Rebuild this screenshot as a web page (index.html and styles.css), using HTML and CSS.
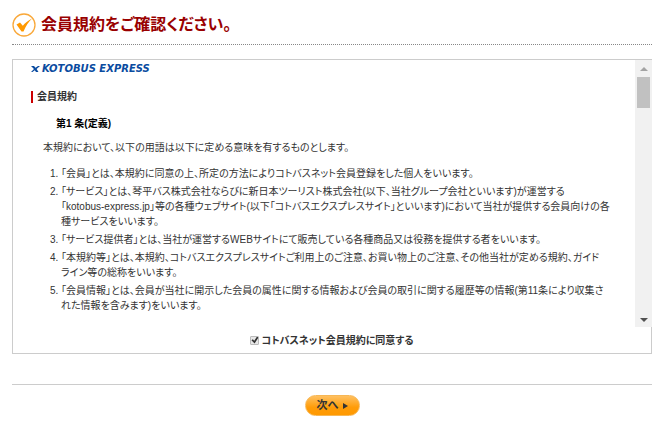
FILE: index.html
```html
<!DOCTYPE html>
<html lang="ja">
  <head>
    <meta charset="UTF-8" />
    <meta name="viewport" content="width=device-width, initial-scale=1.0" />
    <title>会員規約</title>
    <link rel="stylesheet" href="styles.css">
  </head>
  <body>
    <h1 class="page-title">
      <svg class="title-icon" width="24" height="24" viewBox="0 0 24 24" aria-hidden="true">
        <circle cx="12" cy="12" r="11" fill="#fff" stroke="#f9a83a" stroke-width="1.3" />
        <path d="M4.500 11.500 L8 9.500 L10.800 12.800 C13 10 15.800 7.800 20 5.500 C16.500 9 13.700 13 11.500 18.500 L9.500 18.500 Z" fill="#f90" />
      </svg>
      会員規約をご確認ください。
    </h1>
    <form class="agreement">
      <div class="terms-box">
        <div class="terms-scroll">
          <div class="terms">
            <div class="logo">
              <svg width="9" height="6" viewBox="0 0 9 6" aria-hidden="true">
                <path d="M0 0 H3 L4.500 1.700 L7 0 H9 L5.600 3 L7.500 6 H5 L3.800 4.300 L1.500 6 H0 L3 3 Z" fill="#0a4ba0" />
              </svg>
              <span>KOTOBUS EXPRESS</span>
            </div>
            <h2>会員規約</h2>
            <h3>第1 条(定義)</h3>
            <p>本規約において、以下の用語は以下に定める意味を有するものとします。</p>
            <ol>
              <li>「会員」とは、本規約に同意の上、所定の方法によりコトバスネット会員登録をした個人をいいます。</li>
              <li>「サービス」とは、琴平バス株式会社ならびに新日本ツーリスト株式会社(以下、当社グループ会社といいます)が運営する<br />「kotobus-express.jp」等の各種ウェブサイト(以下「コトバスエクスプレスサイト」といいます)において当社が提供する会員向けの各<br />種サービスをいいます。</li>
              <li>「サービス提供者」とは、当社が運営するWEBサイトにて販売している各種商品又は役務を提供する者をいいます。</li>
              <li>「本規約等」とは、本規約、コトバスエクスプレスサイトご利用上のご注意、お買い物上のご注意、その他当社が定める規約、ガイド<br />ライン等の総称をいいます。</li>
              <li>「会員情報」とは、会員が当社に開示した会員の属性に関する情報および会員の取引に関する履歴等の情報(第11条により収集さ<br />れた情報を含みます)をいいます。</li>
            </ol>
          </div>
          <div class="scrollbar" aria-hidden="true">
            <span class="arrow arrow-up"></span>
            <span class="thumb"></span>
            <span class="arrow arrow-down"></span>
          </div>
        </div>
        <div class="agree">
          <input type="checkbox" id="agree" checked />
          <label for="agree">コトバスネット会員規約に同意する</label>
        </div>
      </div>
      <div class="buttons">
        <button type="submit">次へ
          <svg width="5" height="6" viewBox="0 0 5 6" aria-hidden="true"><path d="M0 0 L5 3 L0 6 Z" fill="#333" /></svg>
        </button>
      </div>
    </form>
  </body>
</html>
```
FILE: styles.css
```css
body {
  margin: 0;
  padding: 13px 14px 16px 12px;
  background-color: #fff;
  color: #333;
  font-family: 'Liberation Sans', 'Noto Sans CJK JP', sans-serif;
  font-size: 10px;
  line-height: 15px;
  font-feature-settings: 'palt';
}

.page-title {
  display: flex;
  align-items: center;
  gap: 5px;
  margin: 0 0 14px;
  padding-bottom: 7px;
  border-bottom: 1px dotted #888;
  color: #900;
  font-size: 16px;
  line-height: 24px;
}

.title-icon {
  flex: none;
}

.terms-box {
  border: 1px solid #ccc;
}

.terms-scroll {
  display: flex;
  margin-right: -1px;
}

.terms {
  flex: 1;
  min-width: 0;
  padding: 4px 18px 11px;
}

.logo {
  display: flex;
  align-items: center;
  gap: 2px;
  height: 10px;
  color: #0a4ba0;
  font: italic bold 10px/10px 'DejaVu Sans', sans-serif;
}

.terms h2 {
  margin: 17px 0 0;
  padding-left: 4px;
  border-left: 2px solid #c00;
  font-size: 10px;
  line-height: 12px;
}

.terms h3 {
  margin: 13px 0 0 25px;
  color: #000;
  font-size: 10px;
  line-height: 15px;
}

.terms p {
  margin: 9px 0 0 12px;
}

.terms ol {
  margin: 11px 0 0;
  padding-left: 30px;
}

.terms li {
  margin-bottom: 3px;
  white-space: nowrap;
}

.scrollbar {
  display: flex;
  flex-direction: column;
  align-items: center;
  width: 17px;
  background-color: #f1f1f1;
}

.arrow {
  border: 4px solid transparent;
}

.arrow-up {
  margin-top: 3px;
  border-bottom-color: #a3a3a3;
}

.thumb {
  width: 13px;
  height: 31px;
  margin-top: 6px;
  background-color: #c1c1c1;
}

.arrow-down {
  margin-top: auto;
  margin-bottom: 1px;
  border-top-color: #505050;
}

.agree {
  display: flex;
  justify-content: center;
  align-items: center;
  gap: 2px;
  height: 26px;
  font-weight: bold;
}

.agree input {
  appearance: none;
  display: grid;
  place-items: center;
  box-sizing: border-box;
  width: 9px;
  height: 9px;
  margin: 0;
  border: 1px solid #bbb;
  border-radius: 1px;
  background-color: #e8e8e8;
}

.agree input:checked::before {
  content: '';
  width: 7px;
  height: 7px;
  background-color: #333;
  clip-path: polygon(0 55%, 20% 40%, 40% 60%, 80% 0, 100% 15%, 45% 100%);
}

.buttons {
  display: flex;
  justify-content: center;
  margin-top: 30px;
  padding-top: 10px;
  border-top: 1px solid #ccc;
}

.buttons button {
  display: flex;
  justify-content: center;
  align-items: center;
  gap: 4px;
  width: 55px;
  height: 21px;
  padding: 0;
  border: 1px solid #f7b755;
  border-radius: 11px;
  background: linear-gradient(#ffc060, #ff9c08 60%, #ff9900);
  color: #333;
  font: bold 11px/15px 'Liberation Sans', 'Noto Sans CJK JP', sans-serif;
  cursor: pointer;
}
```
